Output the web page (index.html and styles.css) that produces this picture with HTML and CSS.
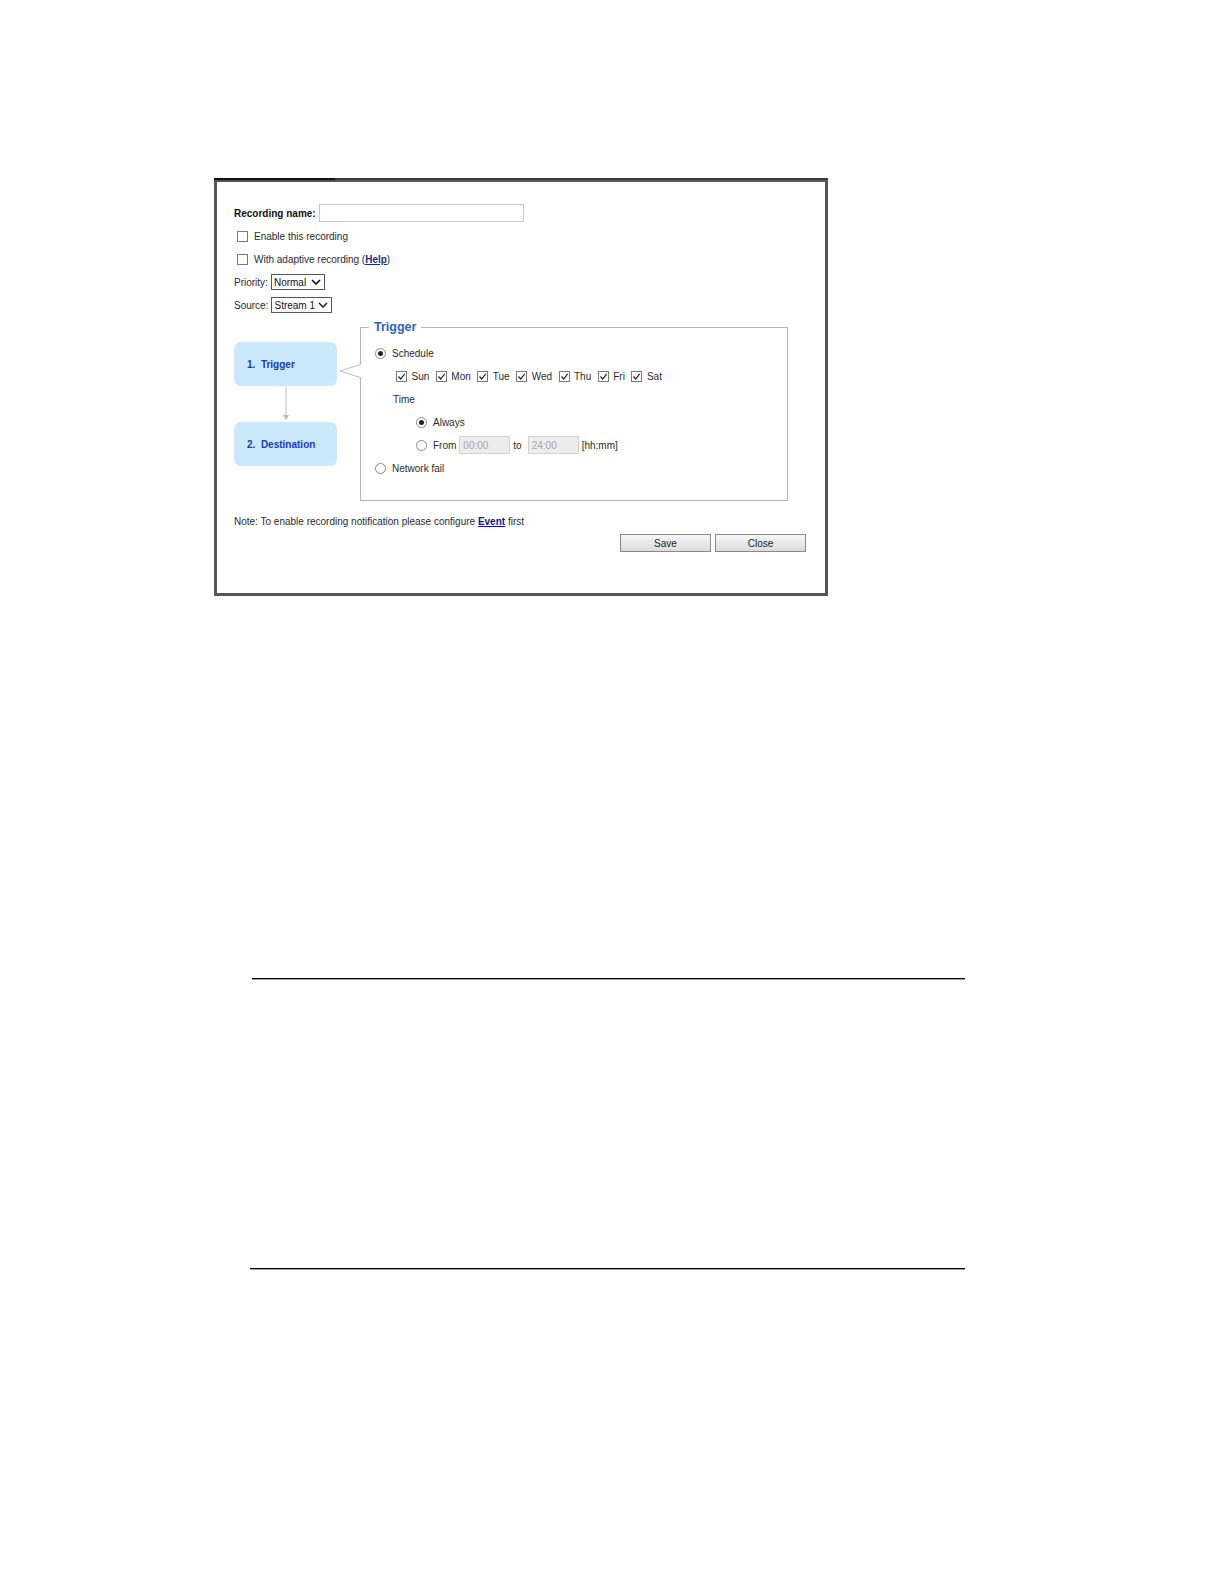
FILE: index.html
```html
<!DOCTYPE html>
<html>
<head>
<meta charset="utf-8">
<link rel="stylesheet" href="styles.css">
</head>
<body>
<div class="page">
  <div class="dialog">
    <div class="topbar"><span class="topbar-dark"></span><span class="topbar-grey"></span></div>
    <div class="content">
      <div class="row">
        <span class="bold-label">Recording name:</span>
        <span class="textbox name-box"></span>
      </div>
      <div class="row indent-cb">
        <span class="cb"></span><span class="cb-label">Enable this recording</span>
      </div>
      <div class="row indent-cb">
        <span class="cb"></span><span class="cb-label">With adaptive recording (<a class="link">Help</a>)</span>
      </div>
      <div class="row">
        <span class="label">Priority:</span>
        <span class="select sel-priority">Normal<svg class="caret" viewBox="0 0 10 6"><path d="M1 1 L5 5 L9 1" fill="none" stroke="#111" stroke-width="1.6"/></svg></span>
      </div>
      <div class="row">
        <span class="label">Source:</span>
        <span class="select sel-source">Stream 1<svg class="caret" viewBox="0 0 10 6"><path d="M1 1 L5 5 L9 1" fill="none" stroke="#111" stroke-width="1.3"/></svg></span>
      </div>

      <div class="lower">
        <div class="steps">
          <div class="step step-first">1.&nbsp; Trigger</div>
          <svg class="arrow" viewBox="0 0 10 36" width="10" height="36"><line x1="5" y1="1" x2="5" y2="30" stroke="#bbb" stroke-width="1"/><path d="M2 29 L5 34 L8 29 Z" fill="#bbb"/></svg>
          <div class="step">2.&nbsp; Destination</div>
        </div>
        <svg class="callout" viewBox="0 0 25 60" width="25" height="60"><path d="M25 30 L3 37 L25 44" fill="#fff" stroke="#bbb" stroke-width="1"/><rect x="23" y="30.5" width="2" height="13" fill="#fff"/></svg>
        <fieldset class="trigger">
          <legend>Trigger</legend>
          <div class="tinner">
            <div class="row"><span class="radio on"></span><span class="cb-label">Schedule</span></div>
            <div class="row days">
              <span class="day"><span class="cb checked"><svg viewBox="0 0 11 11"><path d="M2.5 5.5 L4.7 8 L8.7 2.8" fill="none" stroke="#222" stroke-width="1.2"/></svg></span>Sun</span>
              <span class="day"><span class="cb checked"><svg viewBox="0 0 11 11"><path d="M2.5 5.5 L4.7 8 L8.7 2.8" fill="none" stroke="#222" stroke-width="1.2"/></svg></span>Mon</span>
              <span class="day"><span class="cb checked"><svg viewBox="0 0 11 11"><path d="M2.5 5.5 L4.7 8 L8.7 2.8" fill="none" stroke="#222" stroke-width="1.2"/></svg></span>Tue</span>
              <span class="day"><span class="cb checked"><svg viewBox="0 0 11 11"><path d="M2.5 5.5 L4.7 8 L8.7 2.8" fill="none" stroke="#222" stroke-width="1.2"/></svg></span>Wed</span>
              <span class="day"><span class="cb checked"><svg viewBox="0 0 11 11"><path d="M2.5 5.5 L4.7 8 L8.7 2.8" fill="none" stroke="#222" stroke-width="1.2"/></svg></span>Thu</span>
              <span class="day"><span class="cb checked"><svg viewBox="0 0 11 11"><path d="M2.5 5.5 L4.7 8 L8.7 2.8" fill="none" stroke="#222" stroke-width="1.2"/></svg></span>Fri</span>
              <span class="day"><span class="cb checked"><svg viewBox="0 0 11 11"><path d="M2.5 5.5 L4.7 8 L8.7 2.8" fill="none" stroke="#222" stroke-width="1.2"/></svg></span>Sat</span>
            </div>
            <div class="row time-label">Time</div>
            <div class="row sub"><span class="radio on"></span><span class="cb-label">Always</span></div>
            <div class="row sub">
              <span class="radio"></span><span class="cb-label">From</span>
              <span class="timebox">00:00</span>
              <span class="to">to</span>
              <span class="timebox">24:00</span>
              <span class="hint">[hh:mm]</span>
            </div>
            <div class="row"><span class="radio"></span><span class="cb-label">Network fail</span></div>
          </div>
        </fieldset>
      </div>

      <div class="row note">Note: To enable recording notification please configure&nbsp;<a class="link plain">Event</a>&nbsp;first</div>
      <div class="buttons">
        <span class="btn">Save</span>
        <span class="btn">Close</span>
      </div>
    </div>
  </div>
  <div class="rule rule-one"></div>
  <div class="rule rule-two"></div>
</div>
</body>
</html>
```
FILE: styles.css
```css
html, body {
  margin: 0;
  padding: 0;
  background: #fff;
}
.page {
  width: 1224px;
  height: 1584px;
  padding-top: 178px;
  box-sizing: border-box;
  font-family: "Liberation Sans", Arial, sans-serif;
  font-size: 10px;
  color: #2a2a2a;
}
.dialog {
  margin-left: 214px;
  width: 614px;
  height: 418px;
  box-sizing: border-box;
  border-left: 3px solid #555;
  border-right: 3px solid #555;
  border-bottom: 3px solid #555;
  background: #fff;
}
.topbar {
  display: flex;
  height: 4px;
  margin-left: -3px;
  margin-right: -3px;
}
.topbar-dark {
  width: 121px;
  background: linear-gradient(#111 0 50%, #555 50% 100%);
}
.topbar-grey {
  flex: 1;
  background: linear-gradient(#3c3c3c 0 50%, #5a5a5a 50% 100%);
}
.content {
  padding: 22px 19px 0 17px;
  display: flex;
  flex-direction: column;
  gap: 5px;
}
.row {
  display: flex;
  align-items: center;
  height: 18px;
  white-space: nowrap;
}
.bold-label {
  font-weight: bold;
  margin-right: 3px;
  color: #111;
}
.label {
  margin-right: 3px;
}
.textbox {
  display: inline-block;
  height: 18px;
  box-sizing: border-box;
  border: 1px solid #c6c6c6;
  background: #fff;
}
.name-box {
  width: 205px;
}
.indent-cb {
  padding-left: 3px;
}
.cb {
  display: inline-block;
  width: 11px;
  height: 11px;
  box-sizing: border-box;
  border: 1px solid #7a7a7a;
  background: #fff;
  flex: none;
  position: relative;
}
.cb svg {
  display: block;
  width: 11px;
  height: 11px;
  margin: -1px;
}
.cb-label {
  margin-left: 6px;
}
.link {
  color: #1a2a8a;
  font-weight: bold;
  text-decoration: underline;
}
.link.plain {
  color: #121290;
}
.select {
  display: inline-flex;
  align-items: center;
  height: 16px;
  box-sizing: border-box;
  border: 1px solid #555;
  padding-left: 2px;
  background: #fff;
  color: #111;
}
.sel-priority {
  width: 54px;
}
.sel-source {
  width: 61px;
}
.caret {
  width: 10px;
  height: 6px;
  margin-left: auto;
  margin-right: 3px;
}
.lower {
  display: flex;
  align-items: flex-start;
  margin-top: 1px;
}
.steps {
  width: 103px;
  padding-top: 22px;
  display: flex;
  flex-direction: column;
  align-items: center;
}
.step {
  width: 103px;
  height: 44px;
  box-sizing: border-box;
  border-radius: 7px;
  background: #c9e9fb;
  color: #1b35c0;
  font-weight: bold;
  display: flex;
  align-items: center;
  padding-left: 13px;
}
.arrow {
  display: block;
}
.callout {
  display: block;
  margin-top: 14px;
  margin-right: -2px;
  position: relative;
  z-index: 1;
}
.trigger {
  margin: 0;
  padding: 0;
  width: 428px;
  height: 181px;
  box-sizing: border-box;
  border: 1px solid #b4b4b4;
  min-width: 0;
}
.trigger legend {
  margin-left: 8px;
  padding: 0 5px;
  color: #2866b8;
  font-weight: bold;
  font-size: 12.5px;
  line-height: 14px;
}
.tinner {
  padding: 10px 0 0 14px;
  display: flex;
  flex-direction: column;
  gap: 5px;
}
.radio {
  display: inline-block;
  width: 11px;
  height: 11px;
  box-sizing: border-box;
  border: 1px solid #8a8a8a;
  border-radius: 50%;
  background: #fff;
  flex: none;
  position: relative;
}
.radio.on::after {
  content: "";
  position: absolute;
  left: 2px;
  top: 2px;
  width: 5px;
  height: 5px;
  border-radius: 50%;
  background: #222;
}
.days {
  padding-left: 21px;
}
.day {
  display: inline-flex;
  align-items: center;
  gap: 4.5px;
  margin-right: 6.5px;
}
.time-label {
  padding-left: 18px;
}
.sub {
  padding-left: 41px;
}
.timebox {
  display: inline-flex;
  align-items: center;
  width: 51px;
  height: 18px;
  box-sizing: border-box;
  border: 1px solid #d2d2d2;
  background: #ececec;
  color: #a8a8a8;
  padding-left: 3px;
  margin-left: 3px;
}
.to {
  margin: 0 3px;
}
.hint {
  margin-left: 3px;
}
.note {
  margin-top: 6px;
}
.buttons {
  display: flex;
  justify-content: flex-end;
  gap: 4px;
  margin-top: -1px;
}
.btn {
  width: 91px;
  height: 18px;
  box-sizing: border-box;
  border: 1px solid #8a8a8a;
  background: linear-gradient(#f6f6f6, #dcdcdc);
  display: flex;
  align-items: center;
  justify-content: center;
  color: #222;
}
.rule {
  height: 1px;
  background: #000;
  box-shadow: 0 0.5px 0 #444;
}
.rule-one {
  margin-top: 382px;
  margin-left: 252px;
  width: 713px;
}
.rule-two {
  margin-top: 289px;
  margin-left: 250px;
  width: 715px;
}
```
